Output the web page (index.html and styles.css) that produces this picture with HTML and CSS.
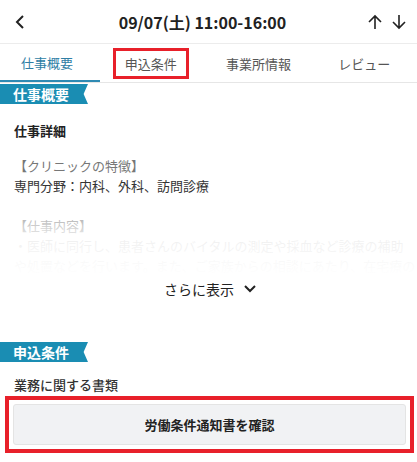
FILE: index.html
```html
<!DOCTYPE html>
<html lang="ja">
<head>
    <meta charset="UTF-8">
    <meta name="viewport" content="width=device-width, initial-scale=1.0">
    <title>求人詳細</title>
    <link rel="stylesheet" href="styles.css">
</head>
<body>
    <header class="topbar">
        <button class="iconButton" aria-label="戻る">
            <svg width="12" height="16" viewBox="0 0 12 16"><path d="M9 2 L3 8 L9 14" fill="none" stroke="#222" stroke-width="2"/></svg>
        </button>
        <h1 class="title">09/07(土) 11:00-16:00</h1>
        <div class="arrows">
            <svg width="16" height="16" viewBox="0 0 16 16"><path d="M8 15 V2 M2 8 L8 2 L14 8" fill="none" stroke="#222" stroke-width="1.6"/></svg>
            <svg width="16" height="16" viewBox="0 0 16 16"><path d="M8 1 V14 M2 8 L8 14 L14 8" fill="none" stroke="#222" stroke-width="1.6"/></svg>
        </div>
    </header>

    <nav class="tabs">
        <div class="tab active">仕事概要</div>
        <div class="tab"><span class="marked">申込条件</span></div>
        <div class="tab">事業所情報</div>
        <div class="tab">レビュー</div>
    </nav>

    <section class="section">
        <h2 class="ribbon">仕事概要</h2>
        <h3 class="subhead">仕事詳細</h3>
        <div class="detail">
            <p class="note">【クリニックの特徴】</p>
            <p>専門分野：内科、外科、訪問診療</p>
            <p>&nbsp;</p>
            <p class="note">【仕事内容】</p>
            <p>・医師に同行し、患者さんのバイタルの測定や採血など診療の補助</p>
            <p>や処置などを行います。また、ご家族からの相談にあたり、在宅療の</p>
        </div>
        <div class="more">さらに表示
            <svg width="14" height="10" viewBox="0 0 14 10"><path d="M2 2 L7 7 L12 2" fill="none" stroke="#222" stroke-width="2"/></svg>
        </div>
    </section>

    <section class="section second">
        <h2 class="ribbon">申込条件</h2>
        <p class="docLabel">業務に関する書類</p>
        <div class="markedBox">
            <button class="docButton">労働条件通知書を確認</button>
        </div>
    </section>
</body>
</html>
```

FILE: styles.css
```css
* {
    box-sizing: border-box;
    font-family: "Noto Sans CJK JP", "Noto Sans", sans-serif;
}

body {
    margin: 0;
    background-color: #ffffff;
    color: #333;
    overflow: hidden;
}

.topbar {
    height: 44px;
    display: flex;
    align-items: center;
    justify-content: space-between;
    padding: 0 8px 0 14px;
    border-bottom: 1px solid #ececec;
}

.iconButton {
    border: none;
    background: none;
    padding: 0;
    width: 24px;
    display: flex;
    align-items: center;
}

.title {
    margin: 0;
    font-size: 16px;
    font-weight: 700;
    color: #222;
}

.arrows {
    display: flex;
    gap: 8px;
    padding-right: 2px;
}

.tabs {
    display: grid;
    grid-template-columns: 100px repeat(3, 1fr);
    height: 39px;
    border-bottom: 1px solid #e6e6e6;
}

.tab {
    display: flex;
    align-items: center;
    justify-content: center;
    font-size: 13px;
    color: #555;
    padding-top: 1px;
}

.tab.active {
    color: #2f7ea5;
    border-bottom: 2px solid #2f8ab3;
    padding-right: 6px;
}

.marked {
    border: 3px solid #e8202a;
    padding: 0 9px;
    line-height: 25px;
    margin-right: 4px;
}

.section {
    padding-top: 1px;
}

.ribbon {
    margin: 0;
    width: 88px;
    height: 20px;
    padding-left: 13px;
    background-color: #1a8db3;
    color: #fff;
    font-size: 14px;
    font-weight: 700;
    line-height: 20px;
    clip-path: polygon(0 0, 100% 0, 95% 50%, 100% 100%, 0 100%);
}

.subhead {
    margin: 17px 14px 16px;
    font-size: 13px;
    line-height: 19px;
    font-weight: 700;
    color: #222;
}

.detail {
    position: relative;
    padding: 0 14px;
    height: 120px;
    overflow: hidden;
}

.detail::after {
    content: "";
    position: absolute;
    left: 0;
    right: 0;
    top: 40px;
    bottom: 0;
    background: linear-gradient(rgba(255, 255, 255, 0), rgba(255, 255, 255, 0.93) 55%, #fff);
}

.detail p {
    margin: 0;
    font-size: 13px;
    line-height: 20px;
    color: #333;
    white-space: nowrap;
}

.detail .note {
    color: #777;
}

.more {
    display: flex;
    align-items: center;
    justify-content: center;
    gap: 9px;
    font-size: 14px;
    color: #222;
    height: 26px;
    padding-left: 4px;
}

.second {
    margin-top: 39px;
}

.docLabel {
    margin: 13px 14px 1px;
    font-size: 13px;
    line-height: 20px;
    font-weight: 500;
    color: #333;
}

.markedBox {
    margin: 0 3px 0 5px;
    border: 4px solid #e8202a;
    padding: 4px;
}

.docButton {
    display: block;
    width: 100%;
    height: 41px;
    border: 1px solid #e4e4e4;
    border-radius: 3px;
    background-color: #f1f2f4;
    font-size: 13px;
    font-weight: 700;
    color: #222;
}
```
